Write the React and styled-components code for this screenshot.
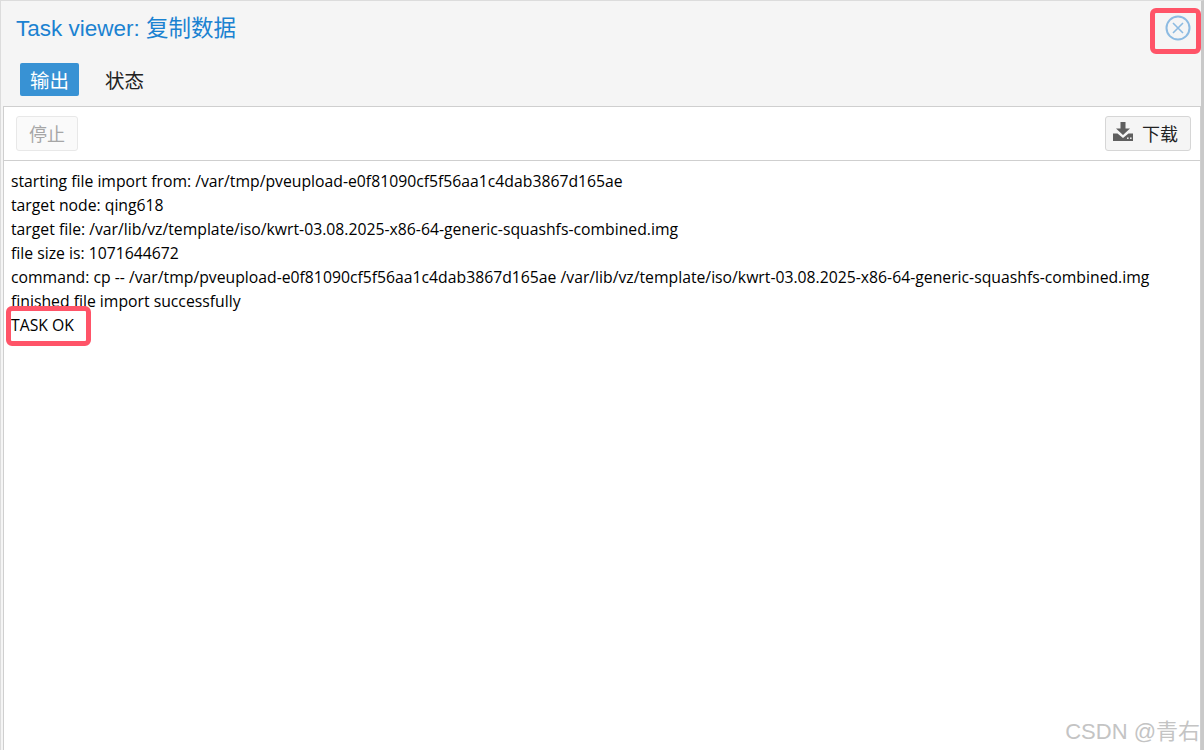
import React from 'react';
import styled, { createGlobalStyle } from 'styled-components';

const CJK = '"Noto Sans CJK SC"';

const GlobalStyle = createGlobalStyle`
  html, body {
    margin: 0;
    padding: 0;
    background: #fff;
  }
`;

const Viewer = styled.div`
  position: relative;
  width: 1204px;
  height: 750px;
  box-sizing: border-box;
  overflow: hidden;
  display: flex;
  flex-direction: column;
  background: #f5f5f5;
  border-top: 1px solid #dcdcdc;
  border-left: 1px solid #dcdcdc;
  border-right: 3px solid #c9c9c9;
`;

const TitleBar = styled.div`
  height: 54px;
  flex: none;
  display: flex;
  align-items: center;
  justify-content: space-between;
  padding: 0 10px 0 15px;
`;

const Title = styled.h1`
  margin: -4px 0 0;
  font: 400 22.5px "Liberation Sans", ${CJK}, sans-serif;
  color: #1b82d1;
`;

const CloseIcon = styled.svg`
  display: block;
  width: 26px;
  height: 26px;
  color: #8dbbe2;
`;

const Tabs = styled.div`
  height: 51px;
  flex: none;
  display: flex;
  gap: 16px;
  padding: 8px 0 0 19px;
  box-sizing: border-box;
`;

const Tab = styled.div`
  width: 59px;
  height: 33px;
  border-radius: 2px;
  display: flex;
  align-items: center;
  justify-content: center;
  font: 400 19.5px ${CJK}, sans-serif;
  color: ${(p) => (p.$active ? '#fff' : '#222')};
  background: ${(p) => (p.$active ? '#3892d4' : 'transparent')};
`;

const Panel = styled.div`
  flex: 1;
  min-height: 0;
  margin-left: 2px;
  background: #fff;
  border: 1px solid #cfcfcf;
  border-width: 1px 1px 0 1px;
  display: flex;
  flex-direction: column;
`;

const Toolbar = styled.div`
  height: 54px;
  flex: none;
  box-sizing: border-box;
  display: flex;
  align-items: center;
  justify-content: space-between;
  padding: 0 9px 1px 12px;
  border-bottom: 1px solid #cfcfcf;
`;

const Button = styled.div`
  height: 35px;
  box-sizing: border-box;
  display: flex;
  align-items: center;
  justify-content: center;
  gap: 9px;
  border-radius: 3px;
  font: 400 18px ${CJK}, sans-serif;
  width: ${(p) => (p.$disabled ? '62px' : '86px')};
  padding-right: ${(p) => (p.$disabled ? '0' : '5px')};
  color: ${(p) => (p.$disabled ? '#a6a6a6' : '#222')};
  background: ${(p) => (p.$disabled ? '#fafafa' : '#f5f5f5')};
  border: 1px solid ${(p) => (p.$disabled ? '#e8e8e8' : '#d6d6d6')};
`;

const DownloadIcon = styled.svg`
  display: block;
  width: 20px;
  height: 19px;
  margin-top: -4px;
  color: #5f5f5f;
`;

const Log = styled.div`
  padding: 8px 0 0 7px;
  font: 400 15.75px/24px "Open Sans", "Noto Sans", sans-serif;
  color: #000;
  white-space: pre;
`;

const Highlight = styled.div`
  position: absolute;
  box-sizing: border-box;
  border: 5px solid #ff5468;
  border-radius: 6px;
  left: ${(p) => p.$x}px;
  top: ${(p) => p.$y}px;
  width: ${(p) => p.$w}px;
  height: ${(p) => p.$h}px;
`;

const Watermark = styled.div`
  position: absolute;
  right: 1px;
  bottom: 5px;
  font: 400 22px "Liberation Sans", ${CJK}, sans-serif;
  color: #c4c4c4;
`;

const logLines = [
  'starting file import from: /var/tmp/pveupload-e0f81090cf5f56aa1c4dab3867d165ae',
  'target node: qing618',
  'target file: /var/lib/vz/template/iso/kwrt-03.08.2025-x86-64-generic-squashfs-combined.img',
  'file size is: 1071644672',
  'command: cp -- /var/tmp/pveupload-e0f81090cf5f56aa1c4dab3867d165ae /var/lib/vz/template/iso/kwrt-03.08.2025-x86-64-generic-squashfs-combined.img',
  'finished file import successfully',
  'TASK OK',
];

export default function App() {
  return (
    <>
      <GlobalStyle />
      <Viewer>
        <TitleBar>
          <Title>Task viewer: 复制数据</Title>
          <CloseIcon viewBox="0 0 26 26" fill="none" stroke="currentColor">
            <circle cx="13" cy="13" r="11.5" strokeWidth="2" />
            <path d="M8 8l10 10M18 8L8 18" strokeWidth="1.6" />
          </CloseIcon>
        </TitleBar>
        <Tabs>
          <Tab $active>输出</Tab>
          <Tab>状态</Tab>
        </Tabs>
        <Panel>
          <Toolbar>
            <Button $disabled>停止</Button>
            <Button>
              <DownloadIcon viewBox="0 0 20 19" fill="currentColor">
                <path d="M7.5 0h5v6.5H17L10 13 3 6.5h4.5z" />
                <path d="M0 11.5h4.5L10 16l5.5-4.5H20V19H0z" />
                <rect x="14" y="15.5" width="1.6" height="1.4" fill="#f5f5f5" />
                <rect x="17" y="15.5" width="1.6" height="1.4" fill="#f5f5f5" />
              </DownloadIcon>
              下载
            </Button>
          </Toolbar>
          <Log>
            {logLines.map((line) => (
              <div key={line}>{line}</div>
            ))}
          </Log>
        </Panel>
        <Highlight $x={1149} $y={7} $w={51} $h={46} />
        <Highlight $x={5} $y={305} $w={85} $h={40} />
        <Watermark>CSDN @青右</Watermark>
      </Viewer>
    </>
  );
}
